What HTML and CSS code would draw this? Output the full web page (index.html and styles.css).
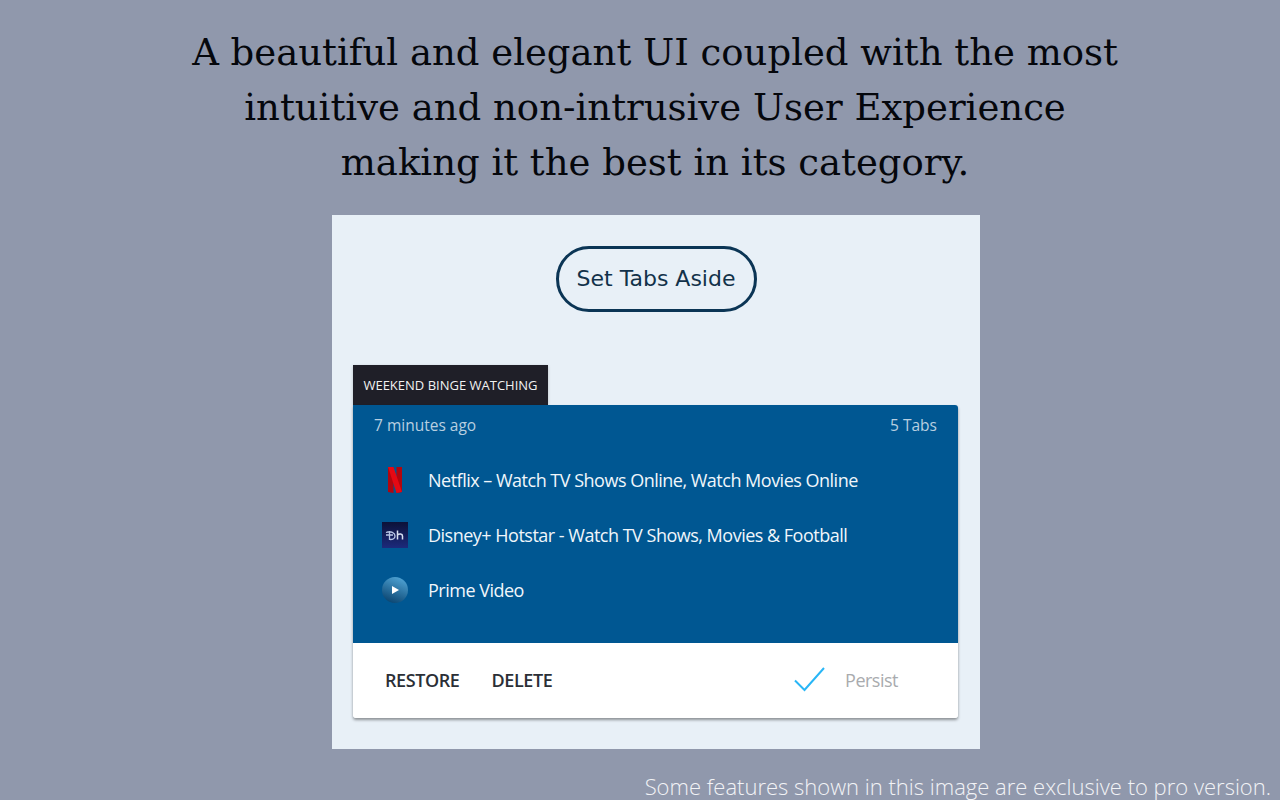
FILE: index.html
```html
<!DOCTYPE html>
<html lang="en">
<head>
<meta charset="utf-8">
<title>Tabs Aside</title>
<link rel="stylesheet" href="styles.css">
</head>
<body>
<main class="slide">
  <h1 class="headline">A beautiful and elegant UI coupled with the most<br>intuitive and non-intrusive User Experience<br>making it the best in its category.</h1>
  <section class="panel">
    <div class="panel-top"><button class="aside-btn">Set Tabs Aside</button></div>
    <div class="session">
      <div class="session-label">WEEKEND BINGE WATCHING</div>
      <div class="card">
        <div class="card-body">
          <div class="meta"><span>7 minutes ago</span><span>5 Tabs</span></div>
          <ul class="tabs">
            <li class="tab">
              <span class="favicon">
                <svg width="26" height="26" viewBox="0 0 26 26"><path fill="#b1060f" d="M6 0h5.500v26l-5.500-1z"/><path fill="#b1060f" d="M14.500 0H20v25l-5.500 1z"/><path fill="#e50914" d="M6 0h5.500l8.500 25-5.500 1z"/></svg>
              </span>
              <span>Netflix – Watch TV Shows Online, Watch Movies Online</span>
            </li>
            <li class="tab">
              <span class="favicon">
                <svg width="26" height="26" viewBox="0 0 26 26"><defs><linearGradient id="hs" x1="0" y1="0" x2="0" y2="1"><stop offset="0" stop-color="#0c1238"/><stop offset="1" stop-color="#1c2a7c"/></linearGradient></defs><rect width="26" height="26" fill="url(#hs)"/><path fill="none" stroke="#b9c6e6" stroke-width="1.300" d="M4 10.500c5-2 9 .5 9 3.500s-3 3.500-5 3.500M7.500 9v9M4 13h7"/><path fill="none" stroke="#d8e0f2" stroke-width="1.500" d="M15.500 8.500v9M15.500 13c1.500-1.500 5-1.500 5 1v3.500"/></svg>
              </span>
              <span>Disney+ Hotstar - Watch TV Shows, Movies &amp; Football</span>
            </li>
            <li class="tab">
              <span class="favicon">
                <svg width="26" height="26" viewBox="0 0 26 26"><defs><linearGradient id="pv" x1="0.700" y1="0" x2="0.300" y2="1"><stop offset="0" stop-color="#4fa3d4"/><stop offset="1" stop-color="#0a4470"/></linearGradient></defs><circle cx="13" cy="13" r="13" fill="url(#pv)"/><path fill="#fff" d="M10 9l7 4-7 4z"/></svg>
              </span>
              <span>Prime Video</span>
            </li>
          </ul>
        </div>
        <div class="card-actions">
          <div class="action-group"><span class="action">RESTORE</span><span class="action">DELETE</span></div>
          <div class="persist">
            <svg width="32" height="26" viewBox="0 0 32 26"><path fill="none" stroke="#29b6f6" stroke-width="2" d="M1 13.500l9.500 9.500L30 1"/></svg>
            <span>Persist</span>
          </div>
        </div>
      </div>
    </div>
  </section>
  <p class="note">Some features shown in this image are exclusive to pro version.</p>
</main>
</body>
</html>
```
FILE: styles.css
```css
* { box-sizing: border-box; }
html, body { margin: 0; padding: 0; }
body { width: 1280px; height: 800px; overflow: hidden; background: #9098ac; }
.slide { display: flex; flex-direction: column; height: 800px; }
.headline {
  margin: 25px 0 0;
  height: 190px;
  padding-left: 30px;
  font: 400 37px/55px "DejaVu Serif", serif;
  color: #05070c;
  text-align: center;
}
.panel {
  margin-left: 332px;
  width: 648px;
  height: 535px;
  padding: 31px 21px 0;
  background: #e8f0f7;
}
.panel-top { display: flex; justify-content: center; height: 119px; padding-left: 0; }
.aside-btn {
  width: 201px;
  height: 66px;
  padding: 0;
  border: 3px solid #0b3555;
  border-radius: 33px;
  background: transparent;
  font: 400 22px "DejaVu Sans", sans-serif;
  color: #12324a;
}
.session { width: 605px; }
.session-label {
  width: 195px;
  height: 40px;
  display: flex;
  align-items: center;
  justify-content: center;
  background: #1f1f28;
  color: #f1f1f1;
  font: 400 13px "Open Sans", sans-serif;
  white-space: nowrap;
  box-shadow: 0 1px 3px rgba(0,0,0,.2);
}
.card {
  border-radius: 0 3px 3px 3px;
  overflow: hidden;
  box-shadow: 0 2px 3px rgba(0,0,0,.4);
  height: 313px;
  display: flex;
  flex-direction: column;
}
.card-body { height: 238px; padding: 9px 21px 0; background: #005792; }
.meta {
  display: flex;
  justify-content: space-between;
  font: 400 15.500px/22px "Open Sans", sans-serif;
  color: #b8cfe0;
}
.tabs { list-style: none; margin: 17px 0 0; padding: 0 0 0 8px; }
.tab {
  display: flex;
  align-items: center;
  gap: 20px;
  height: 55px;
  font: 400 18px/26px "Open Sans", sans-serif;
  letter-spacing: -0.5px;
  color: #f0f6fb;
}
.favicon { width: 26px; height: 26px; display: flex; }
.card-actions {
  flex: 1;
  display: flex;
  align-items: center;
  justify-content: space-between;
  padding: 0 60px 0 32px;
  background: #fff;
}
.action-group { display: flex; gap: 32px; }
.action { font: 600 18px "Open Sans", sans-serif; letter-spacing: -0.4px; color: #2b2f36; }
.persist { display: flex; align-items: center; gap: 19px; font: 400 18px "Open Sans", sans-serif; letter-spacing: -0.5px; color: #a9abae; }
.note {
  margin: 23px 9px 0 0;
  text-align: right;
  font: 300 22px/28px "Open Sans", sans-serif;
  color: #f2f3f6;
  white-space: nowrap;
}
```
